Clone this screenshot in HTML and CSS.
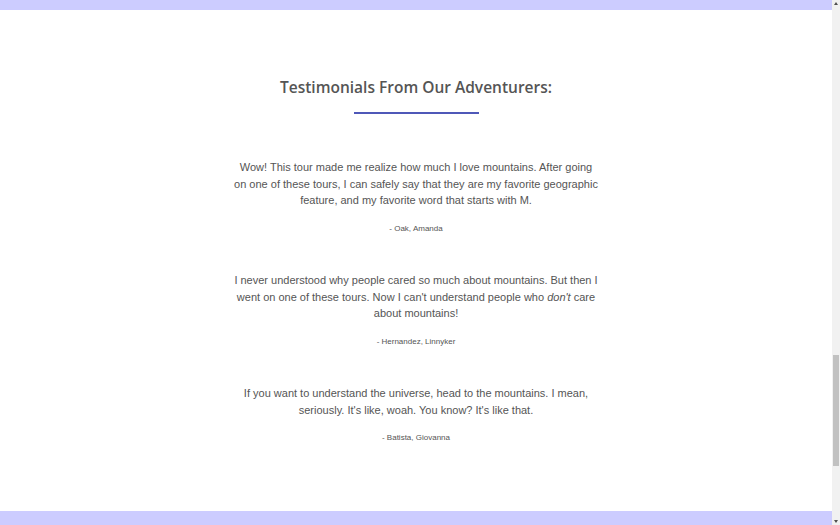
FILE: index.html
```html
<!DOCTYPE html>
<html lang="en">
<head>
<meta charset="utf-8">
<title>Testimonials</title>
<link rel="stylesheet" href="styles.css">
</head>
<body>
<div class="page">
  <header class="band band-top"></header>
  <section class="testimonials">
    <h2 class="title">Testimonials From Our Adventurers:</h2>
    <div class="rule"></div>
    <div class="list">
      <div class="item">
        <p class="quote">Wow! This tour made me realize how much I love mountains. After going on one of these tours, I can safely say that they are my favorite geographic feature, and my favorite word that starts with M.</p>
        <p class="author">- Oak, Amanda</p>
      </div>
      <div class="item">
        <p class="quote">I never understood why people cared so much about mountains. But then I went on one of these tours. Now I can't understand people who <em>don't</em> care about mountains!</p>
        <p class="author">- Hernandez, Linnyker</p>
      </div>
      <div class="item">
        <p class="quote">If you want to understand the universe, head to the mountains. I mean, seriously. It's like, woah. You know? It's like that.</p>
        <p class="author">- Batista, Giovanna</p>
      </div>
    </div>
  </section>
  <footer class="band band-bottom"></footer>
</div>
<div class="scrollbar" aria-hidden="true">
  <span class="arrow arrow-up"></span>
  <span class="thumb"></span>
  <span class="arrow arrow-down"></span>
</div>
<script src="script.js"></script>
</body>
</html>
```

FILE: styles.css
```css
html, body {
  margin: 0;
  padding: 0;
  background: #ffffff;
}
body {
  font-family: "Liberation Sans", Arial, sans-serif;
  color: #555555;
}
.page {
  margin-right: 8px;
}
.band {
  background: #ccccff;
}
.band-top {
  height: 1618px;
}
.band-bottom {
  height: 222px;
}
.testimonials {
  box-sizing: border-box;
  height: 501px;
  padding-top: 67px;
  display: flex;
  flex-direction: column;
  align-items: center;
}
.title {
  margin: 0;
  font-family: "Open Sans", sans-serif;
  font-weight: 600;
  font-size: 15.5px;
  line-height: 21px;
  color: #555555;
  text-align: center;
}
.rule {
  width: 125px;
  height: 2px;
  margin-top: 14px;
  background: #4f58b8;
}
.list {
  margin-top: 45px;
  display: flex;
  flex-direction: column;
  gap: 39px;
  align-items: center;
}
.item {
  width: 366px;
  text-align: center;
}
.quote {
  margin: 0;
  font-size: 11px;
  line-height: 16.5px;
  color: #555555;
}
.author {
  margin: 15px 0 0;
  font-size: 8px;
  line-height: 9.5px;
  color: #555555;
}
.scrollbar {
  position: fixed;
  top: 0;
  right: 0;
  width: 8px;
  height: 100%;
  background: #f1f1f1;
}
.thumb {
  position: absolute;
  left: 1px;
  top: 355px;
  width: 6px;
  height: 111px;
  background: #c1c1c1;
}
.arrow {
  position: absolute;
  left: 2px;
  width: 0;
  height: 0;
  border-left: 2px solid transparent;
  border-right: 2px solid transparent;
}
.arrow-up {
  top: 2px;
  border-bottom: 3px solid #505050;
}
.arrow-down {
  bottom: 2px;
  border-top: 3px solid #505050;
}
```

FILE: script.js
```js
window.scrollTo(0, 1608);
window.addEventListener('load', function () { window.scrollTo(0, 1608); });
```
